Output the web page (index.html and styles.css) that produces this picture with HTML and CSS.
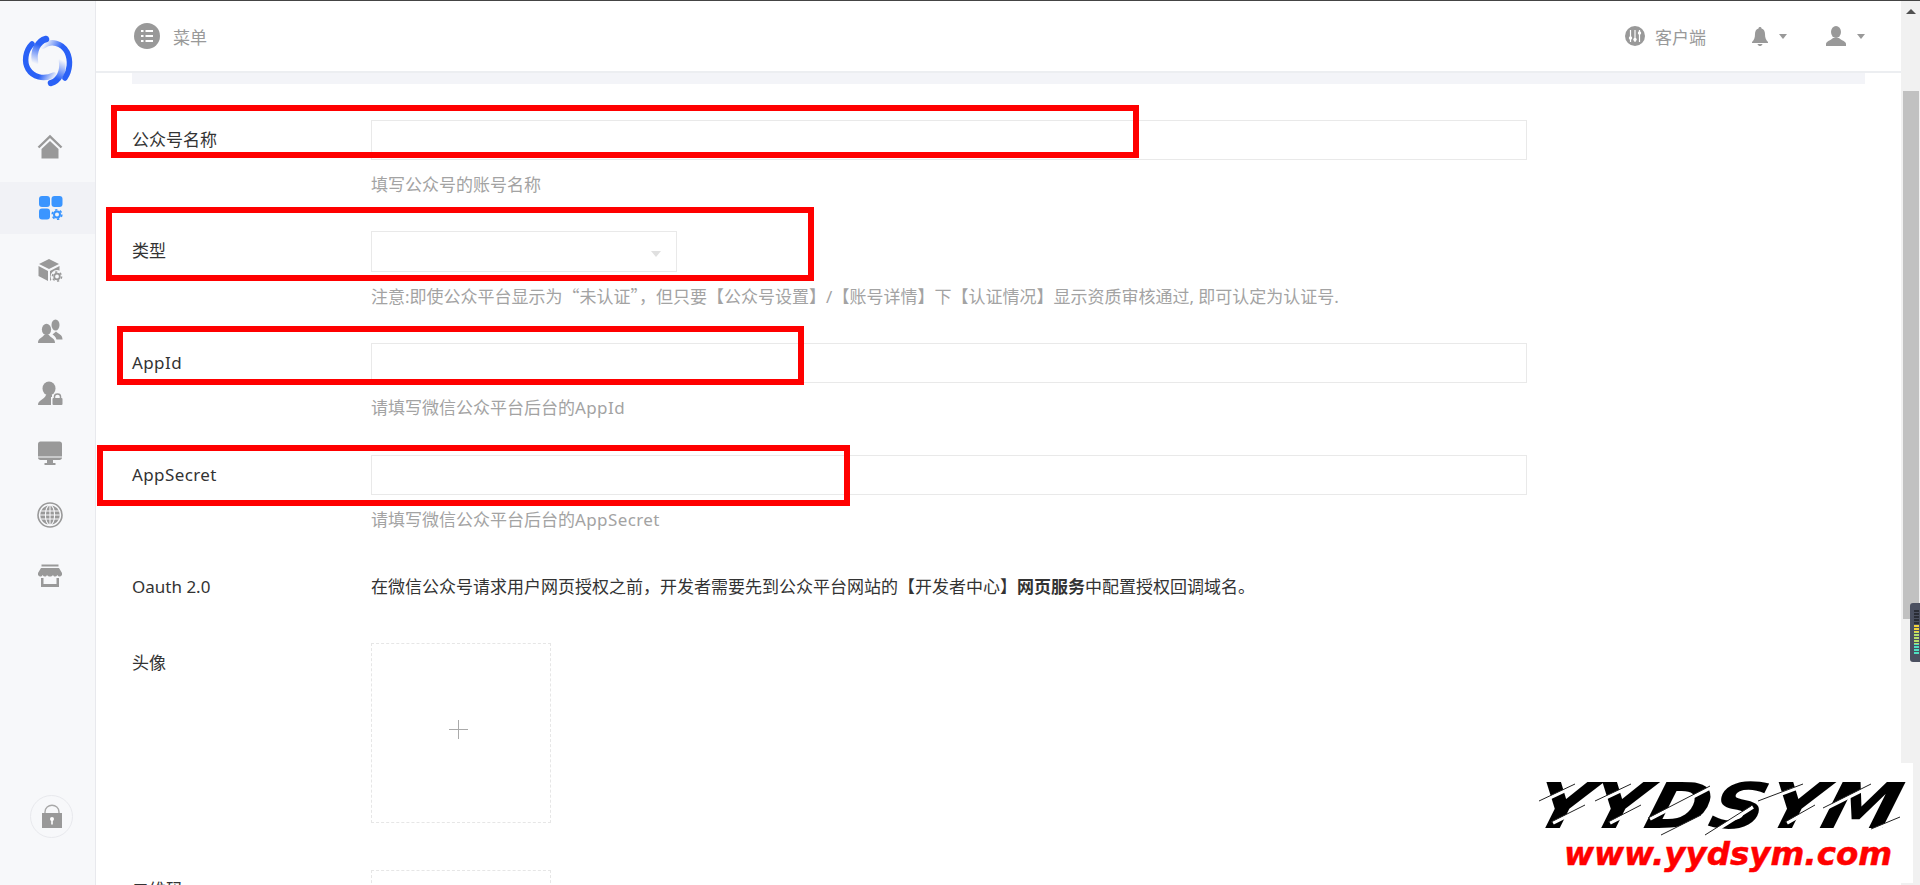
FILE: index.html
```html
<!DOCTYPE html>
<html lang="zh-CN">
<head>
    <meta charset="UTF-8">
    <meta name="viewport" content="width=device-width, initial-scale=1.0">
    <title>公众号设置</title>
    <link rel="stylesheet" href="styles.css">
</head>
<body>
    <div class="app">
        <!-- 侧边栏 -->
        <aside class="sidebar">
            <div class="logo">
                <svg width="65" height="65" viewBox="0 0 65 65" fill="none" stroke-linecap="round">
                    <defs>
                        <linearGradient id="lg1" gradientUnits="userSpaceOnUse" x1="12" y1="30" x2="38" y2="44">
                            <stop offset="0.55" stop-color="#2a61f6"/><stop offset="1" stop-color="#2a61f6" stop-opacity="0.1"/>
                        </linearGradient>
                        <linearGradient id="lg2" gradientUnits="userSpaceOnUse" x1="28" y1="9" x2="19" y2="33">
                            <stop offset="0.25" stop-color="#2a61f6"/><stop offset="1" stop-color="#2a61f6" stop-opacity="0"/>
                        </linearGradient>
                        <linearGradient id="lg3" gradientUnits="userSpaceOnUse" x1="52" y1="30" x2="26" y2="16">
                            <stop offset="0.45" stop-color="#2a61f6"/><stop offset="1" stop-color="#2a61f6" stop-opacity="0.05"/>
                        </linearGradient>
                        <linearGradient id="lg4" gradientUnits="userSpaceOnUse" x1="34" y1="52" x2="45" y2="29">
                            <stop offset="0.25" stop-color="#2a61f6"/><stop offset="1" stop-color="#2a61f6" stop-opacity="0"/>
                        </linearGradient>
                    </defs>
                    <g transform="translate(0 2)">
                        <path d="M15 13C8 20 7 31 11 38C16 46 26 49 37 44" stroke="url(#lg1)" stroke-width="5.500"/>
                        <path d="M29 8C21 10 16 20 18 31" stroke="url(#lg2)" stroke-width="6.500"/>
                        <path d="M26 15C34 9 45 12 50 21C54 29 53 40 48 47" stroke="url(#lg3)" stroke-width="5.500"/>
                        <path d="M34 52C41 50 47 42 45 30" stroke="url(#lg4)" stroke-width="6.500"/>
                    </g>
                </svg>
            </div>
            <nav class="nav">
                <a class="nav-item">
                    <svg class="nav-icon" viewBox="0 0 26 26"><path d="M1.5 13.5L13 2.5L24.5 13.5" fill="none" stroke="#999" stroke-width="2.4"/><path d="M4.5 15L13 7L21.5 15V24.5H4.5Z" fill="#999"/></svg>
                </a>
                <a class="nav-item active">
                    <svg class="nav-icon" viewBox="0 0 26 26" fill="#3a95ff"><rect x="2" y="1" width="11" height="11" rx="3"/><rect x="14.5" y="1" width="11" height="11" rx="3"/><rect x="2" y="13.5" width="11" height="11" rx="3"/><g fill="none" stroke="#3a95ff"><circle cx="20" cy="19.5" r="3" stroke-width="2"/><circle cx="20" cy="19.5" r="4.8" stroke-width="1.6" stroke-dasharray="2.4 2.6"/></g></svg>
                </a>
                <a class="nav-item">
                    <svg class="nav-icon" viewBox="0 0 26 26" fill="#999"><path d="M12 2L22 7L12 12L2 7Z"/><path d="M1.5 9L11 14V24L1.5 19Z"/><path d="M13 14L22.5 9V15L13 24Z"/><circle cx="20" cy="19.5" r="6.5" fill="#f7f8fa"/><g fill="none" stroke="#999"><circle cx="20" cy="19.5" r="2.8" stroke-width="1.8"/><circle cx="20" cy="19.5" r="4.6" stroke-width="1.5" stroke-dasharray="2.2 2.6"/></g></svg>
                </a>
                <a class="nav-item">
                    <svg class="nav-icon" viewBox="0 0 26 26" fill="#999"><ellipse cx="18.5" cy="7" rx="4" ry="5.5"/><path d="M19 13.5C21 16 25.5 16 25.5 21.5H19.5C18.5 18.5 17 17.5 15.5 16.5Z"/><ellipse cx="9.5" cy="11.5" rx="4.6" ry="5.8"/><path d="M1 25C1 20 5.5 20 7 17H12C13.5 20 18 20 18 25Z"/></svg>
                </a>
                <a class="nav-item">
                    <svg class="nav-icon" viewBox="0 0 26 26" fill="#999"><ellipse cx="12" cy="9.5" rx="6.5" ry="7"/><path d="M1 26C1 21 7 21 9 16H15V18H14V26Z"/><rect x="15.5" y="19" width="10" height="7" rx="1"/><path d="M17.5 19V17.5C17.5 14 23.5 14 23.5 17.5V19" fill="none" stroke="#999" stroke-width="1.5"/></svg>
                </a>
                <a class="nav-item">
                    <svg class="nav-icon" viewBox="0 0 26 26" fill="#999"><path d="M3.5 1.5H22.5C24 1.5 25 2.5 25 4V16.500H1V4C1 2.5 2 1.5 3.5 1.5Z"/><path d="M1 17.500H25C25 19 24 20 22.5 20H3.5C2 20 1 19 1 17.500Z"/><rect x="10" y="20" width="6" height="3"/><rect x="7.5" y="23" width="11" height="2"/></svg>
                </a>
                <a class="nav-item">
                    <svg class="nav-icon" viewBox="0 0 26 26"><circle cx="13" cy="13" r="12" fill="none" stroke="#999" stroke-width="1.6"/><circle cx="13" cy="13" r="9.8" fill="#999"/><g fill="none" stroke="#f7f8fa" stroke-width="1.1"><ellipse cx="13" cy="13" rx="4.6" ry="10"/><path d="M13 3V23M4 9H22M3 13H23M4 17H22"/></g></svg>
                </a>
                <a class="nav-item">
                    <svg class="nav-icon" viewBox="0 0 26 26" fill="#999"><rect x="4.5" y="1.5" width="17" height="2"/><path d="M4 5H22L25 10V12C23.5 14 21.5 14 20.5 12C19 14 17 14 16 12C14.5 14 11.5 14 10 12C9 14 7 14 5.5 12C4.500 14 2.500 14 1 12V10Z"/><path d="M4 15H6.500V21H19.500V15H22V24H4Z"/></svg>
                </a>
            </nav>
            <button class="lock-btn">
                <svg width="26" height="28" viewBox="0 0 26 28"><path d="M6 12V9C6 0 20 0 20 9V12" fill="none" stroke="#a8a8a8" stroke-width="1.4"/><rect x="3" y="10" width="20" height="15" fill="#999"/><circle cx="13" cy="16" r="2" fill="#fff"/><rect x="12.200" y="16" width="1.600" height="5.500" fill="#fff"/></svg>
            </button>
        </aside>

        <main class="main">
            <header class="topbar">
                <span class="round-icon menu-icon">
                    <svg width="26" height="26" viewBox="0 0 26 26"><circle cx="13" cy="13" r="13" fill="#999"/><path d="M7 8H9.500M11.500 8H19M7 13H9.500M11.500 13H19M7 18H9.500M11.500 18H19" stroke="#fff" stroke-width="2"/></svg>
                </span>
                <span class="menu-text">菜单</span>
                <div class="topbar-right">
                    <svg width="20" height="20" viewBox="0 0 20 20"><circle cx="10" cy="10" r="10" fill="#999"/><path d="M5.500 4V16M10 4V16M14.500 4V16" stroke="#fff" stroke-width="1.200"/><circle cx="5.500" cy="12" r="1.700" fill="#fff"/><circle cx="10" cy="13.500" r="1.700" fill="#fff"/><circle cx="14.500" cy="7" r="1.700" fill="#fff"/></svg>
                    <span class="client-text">客户端</span>
                    <svg class="bell" width="16" height="20" viewBox="0 0 16 20" fill="#999"><path d="M8 1C9 1 9.500 1.500 9.500 2.500C12 3.300 13 5.500 13 8C13 12 14 14 16 16V17H0V16C2 14 3 12 3 8C3 5.500 4 3.300 6.500 2.500C6.500 1.500 7 1 8 1Z"/><path d="M5.500 18H10.500C10 19.500 9 20 8 20C7 20 6 19.500 5.500 18Z"/></svg>
                    <i class="caret"></i>
                    <svg class="person" width="20" height="20" viewBox="0 0 20 20" fill="#999"><ellipse cx="10" cy="6" rx="5" ry="6"/><path d="M0 20V18C0 15 5 14.500 7 12H13C15 14.500 20 15 20 18V20Z"/></svg>
                    <i class="caret"></i>
                </div>
            </header>
            <div class="notice"></div>

            <form class="form">
                <div class="form-row">
                    <label class="form-label">公众号名称</label>
                    <div>
                        <div class="input"></div>
                        <p class="hint">填写公众号的账号名称</p>
                    </div>
                </div>
                <div class="form-row">
                    <label class="form-label">类型</label>
                    <div>
                        <div class="input select"><i class="select-arrow"></i></div>
                        <p class="hint">注意:即使公众平台显示为<span class="cjk">“未认证”</span>，但只要【公众号设置】/【账号详情】下【认证情况】显示资质审核通过, 即可认定为认证号.</p>
                    </div>
                </div>
                <div class="form-row">
                    <label class="form-label latin">AppId</label>
                    <div>
                        <div class="input"></div>
                        <p class="hint">请填写微信公众平台后台的<span class="latin">AppId</span></p>
                    </div>
                </div>
                <div class="form-row">
                    <label class="form-label latin">AppSecret</label>
                    <div>
                        <div class="input"></div>
                        <p class="hint">请填写微信公众平台后台的<span class="latin">AppSecret</span></p>
                    </div>
                </div>
                <div class="form-row oauth-row">
                    <label class="form-label">Oauth 2.0</label>
                    <div class="oauth-text">在微信公众号请求用户网页授权之前，开发者需要先到公众平台网站的【开发者中心】<b>网页服务</b>中配置授权回调域名。</div>
                </div>
                <div class="form-row upload-row">
                    <label class="form-label">头像</label>
                    <div class="upload"><i class="plus"></i></div>
                </div>
                <div class="form-row">
                    <label class="form-label">二维码</label>
                    <div class="upload"></div>
                </div>
            </form>
        </main>

        <div class="scrollbar">
            <i class="scroll-up"></i>
            <div class="scroll-thumb"></div>
        </div>
    </div>

    <!-- 红框标注 -->
    <div class="mark mark-1"></div>
    <div class="mark mark-2"></div>
    <div class="mark mark-3"></div>
    <div class="mark mark-4"></div>

    <div class="meter"><div class="meter-bars"></div></div>

    <!-- 水印 -->
    <div class="watermark">
        <div class="wm-title">YYDSYM</div>
        <div class="wm-url">www.yydsym.com</div>
        <svg class="wm-cuts" width="393" height="120" viewBox="0 0 393 120" fill="none">
            <g stroke="#fff" stroke-width="3.500">
                <path d="M21 39L57 22M77 39L113 22M130 56L192 24M240 39L285 22M305 46L353 22"/>
                <path d="M33 60L67 43M90 60L123 43M143 73L183 53M187 73L233 44M267 60L297 43M353 67L382 55"/>
            </g>
            <g stroke="#222" stroke-width="1">
                <path d="M19 38L55 21M75 38L111 21M128 55L190 23M238 38L283 21M303 45L351 21"/>
                <path d="M31 59L65 42M88 59L121 42M141 72L181 52M185 72L231 43M265 59L295 42M351 66L380 54"/>
            </g>
        </svg>
    </div>
</body>
</html>
```

FILE: styles.css
```css
* {
    margin: 0;
    padding: 0;
    box-sizing: border-box;
}

html, body {
    height: 885px;
    overflow: hidden;
}

body {
    position: relative;
    font-family: "Noto Sans", "Noto Sans CJK SC", sans-serif;
    font-size: 17px;
    color: #333;
    background: #fff;
    border-top: 1px solid #444;
}

.cjk {
    font-family: "Noto Sans CJK SC", sans-serif;
}

.latin {
    letter-spacing: 0.4px;
}

.app {
    display: flex;
    height: 884px;
}

/* 侧边栏 */
.sidebar {
    width: 96px;
    flex-shrink: 0;
    display: flex;
    flex-direction: column;
    background: #f7f8fa;
    border-right: 1px solid #e8e9ed;
}

.logo {
    height: 120px;
    padding-left: 3px;
    display: flex;
    justify-content: center;
    align-items: center;
}

.nav-item {
    display: flex;
    align-items: center;
    height: 52px;
    margin-bottom: 9.3px;
    padding-left: 37px;
}

.nav-item.active {
    background: #f1f2f6;
}

.nav-icon {
    width: 26px;
    height: 26px;
}

.lock-btn {
    width: 43px;
    height: 43px;
    margin: auto 0 47px 30px;
    display: flex;
    align-items: center;
    justify-content: center;
    background: transparent;
    border: 1px solid #e8e9ed;
    border-radius: 50%;
}

/* 主体 */
.main {
    flex: 1;
    min-width: 0;
    overflow: hidden;
}

.topbar {
    height: 72px;
    display: flex;
    align-items: center;
    padding: 0 36px 0 38px;
    border-bottom: 2px solid #eceef1;
    color: #999;
}

.round-icon {
    display: flex;
}

.menu-text {
    margin-left: 13px;
}

.topbar-right {
    margin-left: auto;
    display: flex;
    align-items: center;
}

.client-text {
    margin-left: 10px;
}

.bell {
    margin-left: 46px;
}

.person {
    margin-left: 39px;
}

.caret {
    margin-left: 11px;
    border: 4.5px solid transparent;
    border-top: 5px solid #999;
    border-bottom: 0;
}

.notice {
    height: 11px;
    margin: 0 36px;
    background: #f3f4f8;
}

.form {
    padding: 36px 0 0 36px;
}

.form-row {
    display: grid;
    grid-template-columns: 239px 1156px;
    margin-bottom: 35px;
}

.form-row:first-child {
    margin-bottom: 34px;
}

.form-label {
    line-height: 40px;
    color: #333;
}

.input {
    height: 40px;
    border: 1px solid #e9e9e9;
    background: #fff;
}

.select {
    position: relative;
    width: 306px;
    height: 41px;
    margin-bottom: -1px;
}

.select-arrow {
    position: absolute;
    right: 15px;
    top: 19px;
    border: 5px solid transparent;
    border-top: 6px solid #e0e0e0;
    border-bottom: 0;
}

.hint {
    height: 24px;
    margin-top: 13px;
    line-height: 24px;
    color: #a3a3a3;
    white-space: nowrap;
}

.oauth-row {
    margin-bottom: 36px;
}

.oauth-text {
    line-height: 40px;
    white-space: nowrap;
}

.upload-row {
    margin-bottom: 47px;
}

.upload {
    position: relative;
    width: 180px;
    height: 180px;
    border: 1px dashed #e6e6e6;
}

.plus {
    position: absolute;
    left: 77px;
    top: 76px;
    width: 19px;
    height: 19px;
    background: linear-gradient(#aaa, #aaa) center / 19px 1px no-repeat,
                linear-gradient(#aaa, #aaa) center / 1px 19px no-repeat;
}

/* 滚动条 */
.scrollbar {
    width: 19px;
    flex-shrink: 0;
    background: #f1f1f1;
    padding: 8px 1px 0 2px;
}

.scroll-up {
    display: block;
    width: 0;
    margin: 0 auto 77px;
    border: 5px solid transparent;
    border-bottom: 5px solid #505050;
    border-top: 0;
}

.scroll-thumb {
    height: 528px;
    background: #c1c1c1;
}

/* 红框 */
.mark {
    position: absolute;
    border: 6px solid #f00;
}

.mark-1 {
    left: 111px;
    top: 104px;
    width: 1028px;
    height: 53px;
}

.mark-2 {
    left: 106px;
    top: 206px;
    width: 708px;
    height: 74px;
}

.mark-3 {
    left: 117px;
    top: 325px;
    width: 687px;
    height: 59px;
}

.mark-4 {
    left: 97px;
    top: 444px;
    width: 753px;
    height: 61px;
}

.meter {
    position: absolute;
    left: 1910px;
    top: 602px;
    width: 12px;
    height: 59px;
    padding: 7px 0 0 4px;
    background: #4b5060;
    border-radius: 3px;
}

.meter-bars {
    width: 5px;
    height: 45px;
    background:
        repeating-linear-gradient(transparent 0 2px, #4b5060 2px 3px),
        linear-gradient(#2a2d36 0 33%, #f2d23c 33% 50%, #b6e06a 50% 75%, #4fe0c0 75%);
}

/* 水印 */
.watermark {
    position: absolute;
    left: 1520px;
    top: 762px;
    width: 393px;
    height: 120px;
    background: #fff;
    overflow: hidden;
}

.wm-title {
    position: absolute;
    left: 15px;
    top: 8px;
    font-family: "DejaVu Sans", sans-serif;
    font-size: 63px;
    line-height: 72px;
    font-weight: bold;
    font-style: italic;
    color: #000;
    white-space: nowrap;
    transform-origin: left center;
    transform: scaleX(1.23) skewX(-12deg);
}

.wm-url {
    position: absolute;
    left: 44px;
    top: 69px;
    font-family: "DejaVu Sans", sans-serif;
    font-size: 32.5px;
    line-height: 44px;
    font-weight: bold;
    font-style: italic;
    color: #f00;
    white-space: nowrap;
    -webkit-text-stroke: 0.5px #f00;
}

.wm-cuts {
    position: absolute;
    left: 0;
    top: 0;
}
```
